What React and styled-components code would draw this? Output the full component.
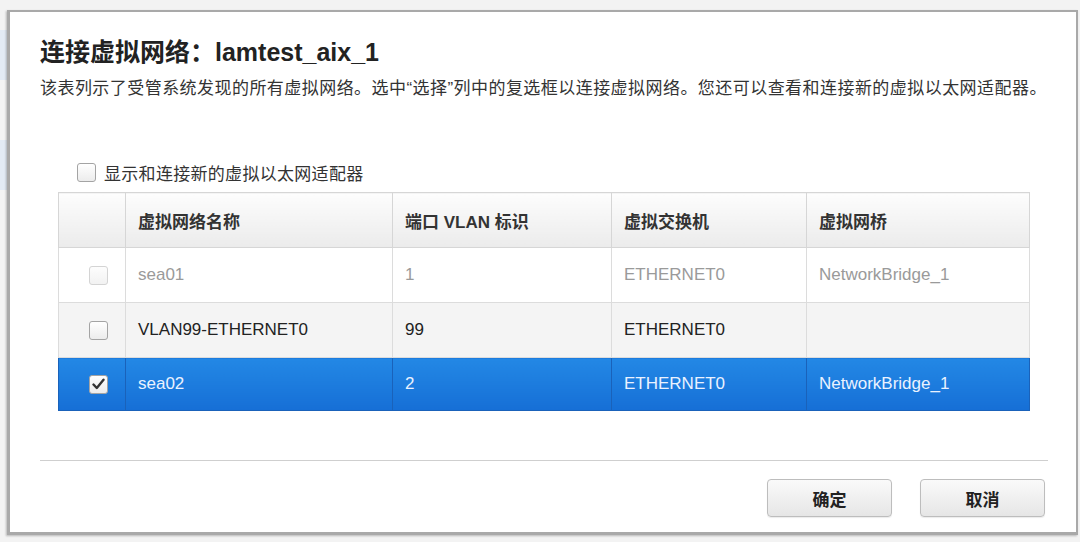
import React from 'react'
import styled, { createGlobalStyle } from 'styled-components'

const GlobalStyle = createGlobalStyle`
    html, body {
        margin: 0;
        padding: 0;
    }
    body {
        width: 1080px;
        height: 542px;
        overflow: hidden;
        font-family: "Liberation Sans", "Noto Sans CJK SC", sans-serif;
        color: #333;
        background:
            linear-gradient(to bottom,
                transparent 0, transparent 30px,
                #e3ebf5 30px, #e3ebf5 80px,
                transparent 80px, transparent 140px,
                #e3ebf5 140px, #e3ebf5 190px,
                transparent 190px) left top / 8px 100% no-repeat,
            #f3f3f3;
    }
`

const rows = [
    { name: 'sea01', vlan: '1', sw: 'ETHERNET0', bridge: 'NetworkBridge_1', state: 'disabled' },
    { name: 'VLAN99-ETHERNET0', vlan: '99', sw: 'ETHERNET0', bridge: '', state: 'normal' },
    { name: 'sea02', vlan: '2', sw: 'ETHERNET0', bridge: 'NetworkBridge_1', state: 'selected' },
]

const widths = [67, 267, 219, 195, 223]

const Check = () => (
    <svg width="13" height="12" viewBox="0 0 13 12">
        <path d="M1.5 6.5 L4.8 10 L11.5 1.8" fill="none" stroke="#333" strokeWidth="2.4" strokeLinecap="round" strokeLinejoin="round" />
    </svg>
)

function App() {
    return (
        <>
            <GlobalStyle />
            <Dialog>
                <Title>连接虚拟网络：lamtest_aix_1</Title>
                <Desc>该表列示了受管系统发现的所有虚拟网络。选中“选择”列中的复选框以连接虚拟网络。您还可以查看和连接新的虚拟以太网适配器。</Desc>
                <ShowNew>
                    <Box />
                    <span>显示和连接新的虚拟以太网适配器</span>
                </ShowNew>
                <Table>
                    <colgroup>
                        {widths.map((w, i) => <col key={i} style={{ width: w }} />)}
                    </colgroup>
                    <thead>
                        <tr>
                            <Th></Th>
                            <Th>虚拟网络名称</Th>
                            <Th>端口 VLAN 标识</Th>
                            <Th>虚拟交换机</Th>
                            <Th>虚拟网桥</Th>
                        </tr>
                    </thead>
                    <tbody>
                        {rows.map((r) => (
                            <Row key={r.name} state={r.state}>
                                <Td><CellBox state={r.state}>{r.state === 'selected' && <Check />}</CellBox></Td>
                                <Td>{r.name}</Td>
                                <Td>{r.vlan}</Td>
                                <Td>{r.sw}</Td>
                                <Td>{r.bridge}</Td>
                            </Row>
                        ))}
                    </tbody>
                </Table>
                <Divider />
                <Buttons>
                    <Button>确定</Button>
                    <Button>取消</Button>
                </Buttons>
            </Dialog>
        </>
    )
}

export default App

const Dialog = styled.div`
    box-sizing: border-box;
    margin: 10px 2px 0 7px;
    width: 1071px;
    height: 525px;
    background: #fff;
    border: 2px solid #a9a9a9;
    border-left-width: 3px;
    border-bottom-width: 3px;
    box-shadow: -1px 1px 2px rgba(0,0,0,0.25);
    padding: 25px 28px 0 30px;
`

const Title = styled.h1`
    margin: 0;
    font-size: 25px;
    line-height: 30px;
    font-weight: bold;
    color: #222;
`

const Desc = styled.p`
    margin: 10px 0 0;
    font-size: 17px;
    line-height: 24px;
    letter-spacing: 0.45px;
    color: #333;
    white-space: nowrap;
`

const ShowNew = styled.div`
    display: flex;
    align-items: center;
    gap: 8px;
    margin-top: 59px;
    padding-left: 37px;
    height: 24px;
    font-size: 17px;
    letter-spacing: 0.3px;
    color: #333;
`

const Box = styled.div`
    box-sizing: border-box;
    width: 19px;
    height: 19px;
    border: 1px solid #a4a4a4;
    border-radius: 3px;
    background: linear-gradient(#ffffff, #ececec);
`

const CellBox = styled(Box)`
    margin-left: 30px;
    display: flex;
    align-items: center;
    justify-content: center;
    border-color: ${p => p.state === 'disabled' ? '#d4d4d4' : '#a4a4a4'};
    background: ${p => p.state === 'disabled' ? 'linear-gradient(#fdfdfd, #f2f2f2)' : 'linear-gradient(#ffffff, #ececec)'};
`

const Table = styled.table`
    margin: 8px 0 0 18px;
    width: 971px;
    table-layout: fixed;
    border-collapse: collapse;
    border: 1px solid #d6d6d6;
    font-size: 17px;
`

const Th = styled.th`
    height: 55px;
    padding: 0 12px;
    text-align: left;
    font-weight: bold;
    color: #333;
    background: linear-gradient(#fdfdfd, #ebebeb);
    border: 1px solid #d6d6d6;
    box-sizing: border-box;
`

const Row = styled.tr`
    td {
        color: ${p => p.state === 'disabled' ? '#9a9a9a' : p.state === 'selected' ? '#eaf2ff' : '#222'};
        background: ${p => p.state === 'disabled' ? '#fff' : p.state === 'selected' ? 'linear-gradient(#2388e5, #166fd6)' : '#f4f4f4'};
        border-color: ${p => p.state === 'selected' ? '#1a62ba' : '#dcdcdc'};
        height: ${p => p.state === 'selected' ? '53px' : '55px'};
    }
`

const Td = styled.td`
    box-sizing: border-box;
    padding: 0 12px;
    border: 1px solid #dcdcdc;
    white-space: nowrap;
    &:first-child {
        padding: 0;
    }
`

const Divider = styled.div`
    margin-top: 49px;
    height: 1px;
    background: #cfcfcf;
`

const Buttons = styled.div`
    display: flex;
    justify-content: flex-end;
    gap: 28px;
    margin-top: 18px;
    padding-right: 3px;
`

const Button = styled.button`
    box-sizing: border-box;
    width: 125px;
    height: 38px;
    border: 1px solid #bdbdbd;
    border-radius: 4px;
    background: linear-gradient(#fafafa, #e6e6e6);
    box-shadow: 0 1px 1px rgba(0,0,0,0.08);
    font-family: "Liberation Sans", "Noto Sans CJK SC", sans-serif;
    font-size: 17px;
    font-weight: bold;
    color: #222;
    padding: 0;
`
